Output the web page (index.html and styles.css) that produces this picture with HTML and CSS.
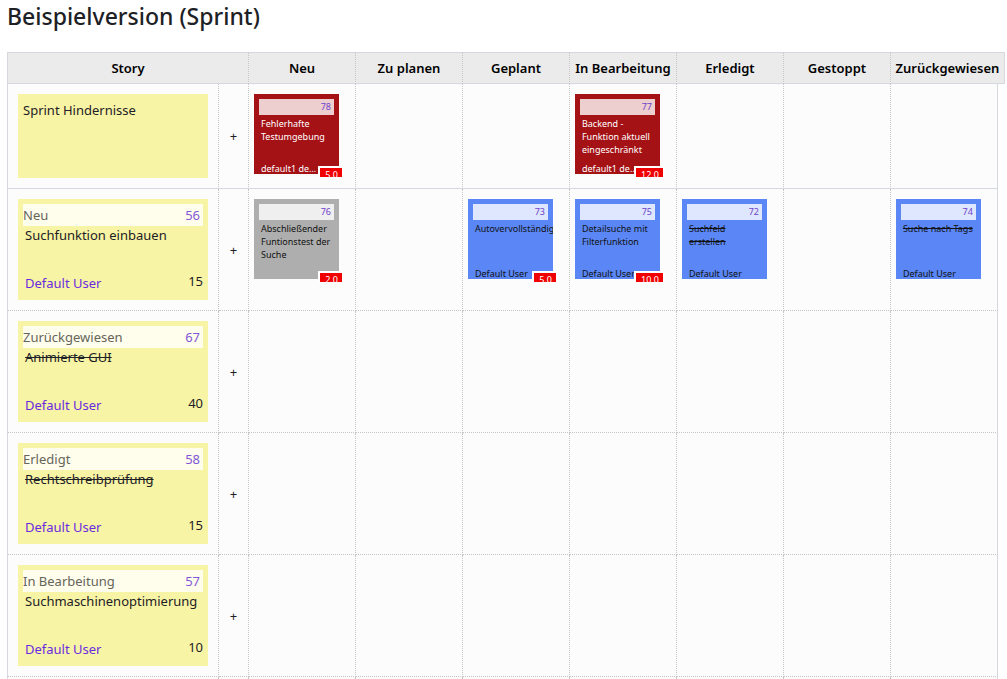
FILE: index.html
```
<!DOCTYPE html>
<html lang="de">
<head>
<meta charset="utf-8">
<title>Beispielversion (Sprint)</title>
<link rel="stylesheet" href="styles.css">
</head>
<body>
<h1 class="title">Beispielversion (Sprint)</h1>
<table class="board">
<colgroup>
<col class="col-story"><col class="col-add"><col><col><col><col><col><col><col><col class="col-edge">
</colgroup>
<thead>
<tr>
<th colspan="2" scope="col">Story</th>
<th scope="col">Neu</th>
<th scope="col">Zu planen</th>
<th scope="col">Geplant</th>
<th scope="col">In Bearbeitung</th>
<th scope="col">Erledigt</th>
<th scope="col">Gestoppt</th>
<th scope="col" colspan="2">Zurückgewiesen</th>
</tr>
</thead>
<tbody>
<tr class="impediments">
<td><div class="story story-plain">Sprint Hindernisse</div></td>
<td class="add"><button type="button" aria-label="Hindernis hinzufügen">+</button></td>
<td><div class="task task-red"><div class="task-id"><a href="#78">78</a></div><div class="task-name">Fehlerhafte Testumgebung</div><div class="task-user">default1 default1</div><div class="hours"><span>5.0</span></div></div></td>
<td></td>
<td></td>
<td><div class="task task-red"><div class="task-id"><a href="#77">77</a></div><div class="task-name">Backend - Funktion aktuell eingeschränkt</div><div class="task-user">default1 default1</div><div class="hours"><span>12.0</span></div></div></td>
<td></td>
<td></td>
<td></td>
</tr>
<tr>
<td><div class="story"><div class="story-head"><span>Neu</span><a href="#56">56</a></div><div class="story-name">Suchfunktion einbauen</div><div class="story-foot"><a href="#user">Default User</a><span class="points">15</span></div></div></td>
<td class="add"><button type="button" aria-label="Aufgabe hinzufügen">+</button></td>
<td><div class="task task-gray"><div class="task-id"><a href="#76">76</a></div><div class="task-name">Abschließender Funtionstest der Suche</div><div class="hours"><span>2.0</span></div></div></td>
<td></td>
<td><div class="task task-blue"><div class="task-id"><a href="#73">73</a></div><div class="task-name">Autovervollständigung</div><div class="task-user">Default User</div><div class="hours"><span>5.0</span></div></div></td>
<td><div class="task task-blue"><div class="task-id"><a href="#75">75</a></div><div class="task-name">Detailsuche mit Filterfunktion</div><div class="task-user">Default User</div><div class="hours"><span>10.0</span></div></div></td>
<td><div class="task task-blue"><div class="task-id"><a href="#72">72</a></div><div class="task-name closed">Suchfeld erstellen</div><div class="task-user">Default User</div></div></td>
<td></td>
<td><div class="task task-blue"><div class="task-id"><a href="#74">74</a></div><div class="task-name closed">Suche nach Tags</div><div class="task-user">Default User</div></div></td>
</tr>
<tr>
<td><div class="story"><div class="story-head"><span>Zurückgewiesen</span><a href="#67">67</a></div><div class="story-name closed">Animierte GUI</div><div class="story-foot"><a href="#user">Default User</a><span class="points">40</span></div></div></td>
<td class="add"><button type="button" aria-label="Aufgabe hinzufügen">+</button></td>
<td></td><td></td><td></td><td></td><td></td><td></td><td></td>
</tr>
<tr>
<td><div class="story"><div class="story-head"><span>Erledigt</span><a href="#58">58</a></div><div class="story-name closed">Rechtschreibprüfung</div><div class="story-foot"><a href="#user">Default User</a><span class="points">15</span></div></div></td>
<td class="add"><button type="button" aria-label="Aufgabe hinzufügen">+</button></td>
<td></td><td></td><td></td><td></td><td></td><td></td><td></td>
</tr>
<tr>
<td><div class="story"><div class="story-head"><span>In Bearbeitung</span><a href="#57">57</a></div><div class="story-name">Suchmaschinenoptimierung</div><div class="story-foot"><a href="#user">Default User</a><span class="points">10</span></div></div></td>
<td class="add"><button type="button" aria-label="Aufgabe hinzufügen">+</button></td>
<td></td><td></td><td></td><td></td><td></td><td></td><td></td>
</tr>
<tr class="rest">
<td></td><td></td><td></td><td></td><td></td><td></td><td></td><td></td><td></td>
</tr>
</tbody>
</table>
</body>
</html>
```
FILE: styles.css
```
* {
  box-sizing: border-box;
}

body {
  margin: 0 2px 0 7px;
  background: #fff;
  color: #1d2125;
  font-family: "Noto Sans", "Open Sans", sans-serif;
  font-size: 13px;
  line-height: 20px;
}

a {
  color: #6a2be0;
  text-decoration: none;
}

.title {
  margin: 0 0 20px;
  font-size: 23px;
  font-weight: 500;
  line-height: 32px;
}

.board {
  width: 100%;
  table-layout: fixed;
  border-collapse: separate;
  border-spacing: 0;
}

.col-story {
  width: 212px;
}

.col-add {
  width: 30px;
}

.col-edge {
  width: 7px;
}

.board th {
  height: 32px;
  padding: 0;
  background: #ebebeb;
  border-top: 1px solid #d5d9df;
  border-bottom: 1px solid #d5d9df;
  border-right: 1px dotted #c6c6c6;
  color: #000;
  font-size: 13px;
  font-weight: 600;
  white-space: nowrap;
}

.board td {
  padding: 10px 0 10px 5px;
  background: #fcfcfc;
  border-right: 1px dotted #c6c6c6;
  border-bottom: 1px dotted #c6c6c6;
  vertical-align: top;
}

.board th:first-child,
.board td:first-child {
  border-left: 1px solid #d5d9df;
}

.board th:last-child,
.board td:last-child {
  border-right: 1px solid #d5d9df;
}

.board td:first-child {
  padding: 10px;
}

.board .impediments td {
  border-bottom: 1px solid #d5d9df;
}

.board .rest td {
  height: 2px;
  padding: 0;
  border-bottom: 0;
}

.board .add {
  padding: 0;
  text-align: center;
  vertical-align: middle;
}

.add button {
  padding: 4px;
  border: 0;
  background: none;
  color: inherit;
  font: inherit;
}

.story {
  height: 101px;
  padding: 5px;
  background: #f8f4a5;
}

.story-plain {
  height: 84px;
  padding-top: 6px;
}

.story-head {
  display: flex;
  justify-content: space-between;
  height: 22px;
  padding-right: 3px;
  background: #fffdec;
  color: #65655a;
  line-height: 22px;
}

.story-head a {
  color: #8357d8;
}

.story-name {
  height: 46px;
  padding-left: 2px;
  line-height: 18px;
}

.closed {
  text-decoration: line-through;
}

.story-foot {
  display: flex;
  justify-content: space-between;
  align-items: flex-end;
  height: 21px;
  padding-left: 2px;
}

.points {
  align-self: flex-start;
  line-height: 18px;
}

.task {
  position: relative;
  width: 85px;
  height: 80px;
  padding: 5px 5px 0;
  font-size: 9px;
  line-height: 13px;
  color: #111;
}

.task-red {
  background: #a51216;
  color: #fff;
}

.task-gray {
  background: #aeaeae;
}

.task-blue {
  background: #5a87f5;
}

.task-id {
  height: 16px;
  padding-right: 3px;
  background: rgba(255, 255, 255, 0.8);
  line-height: 16px;
  text-align: right;
}

.task-id a {
  color: #6f42cc;
}

.task-name {
  width: 80px;
  height: 47px;
  padding: 2px 4px 0 2px;
  overflow: hidden;
}

.task-user {
  width: 60px;
  height: 13px;
  padding-left: 2px;
  overflow: hidden;
  text-overflow: ellipsis;
  white-space: nowrap;
}

.hours {
  position: absolute;
  top: 72px;
  right: -5px;
  height: 11px;
  padding: 2px 2px 0;
  overflow: hidden;
  background: #fff;
  color: #fff;
}

.hours span {
  display: block;
  padding: 0 4px 0 5px;
  background: #f00000;
}
```
